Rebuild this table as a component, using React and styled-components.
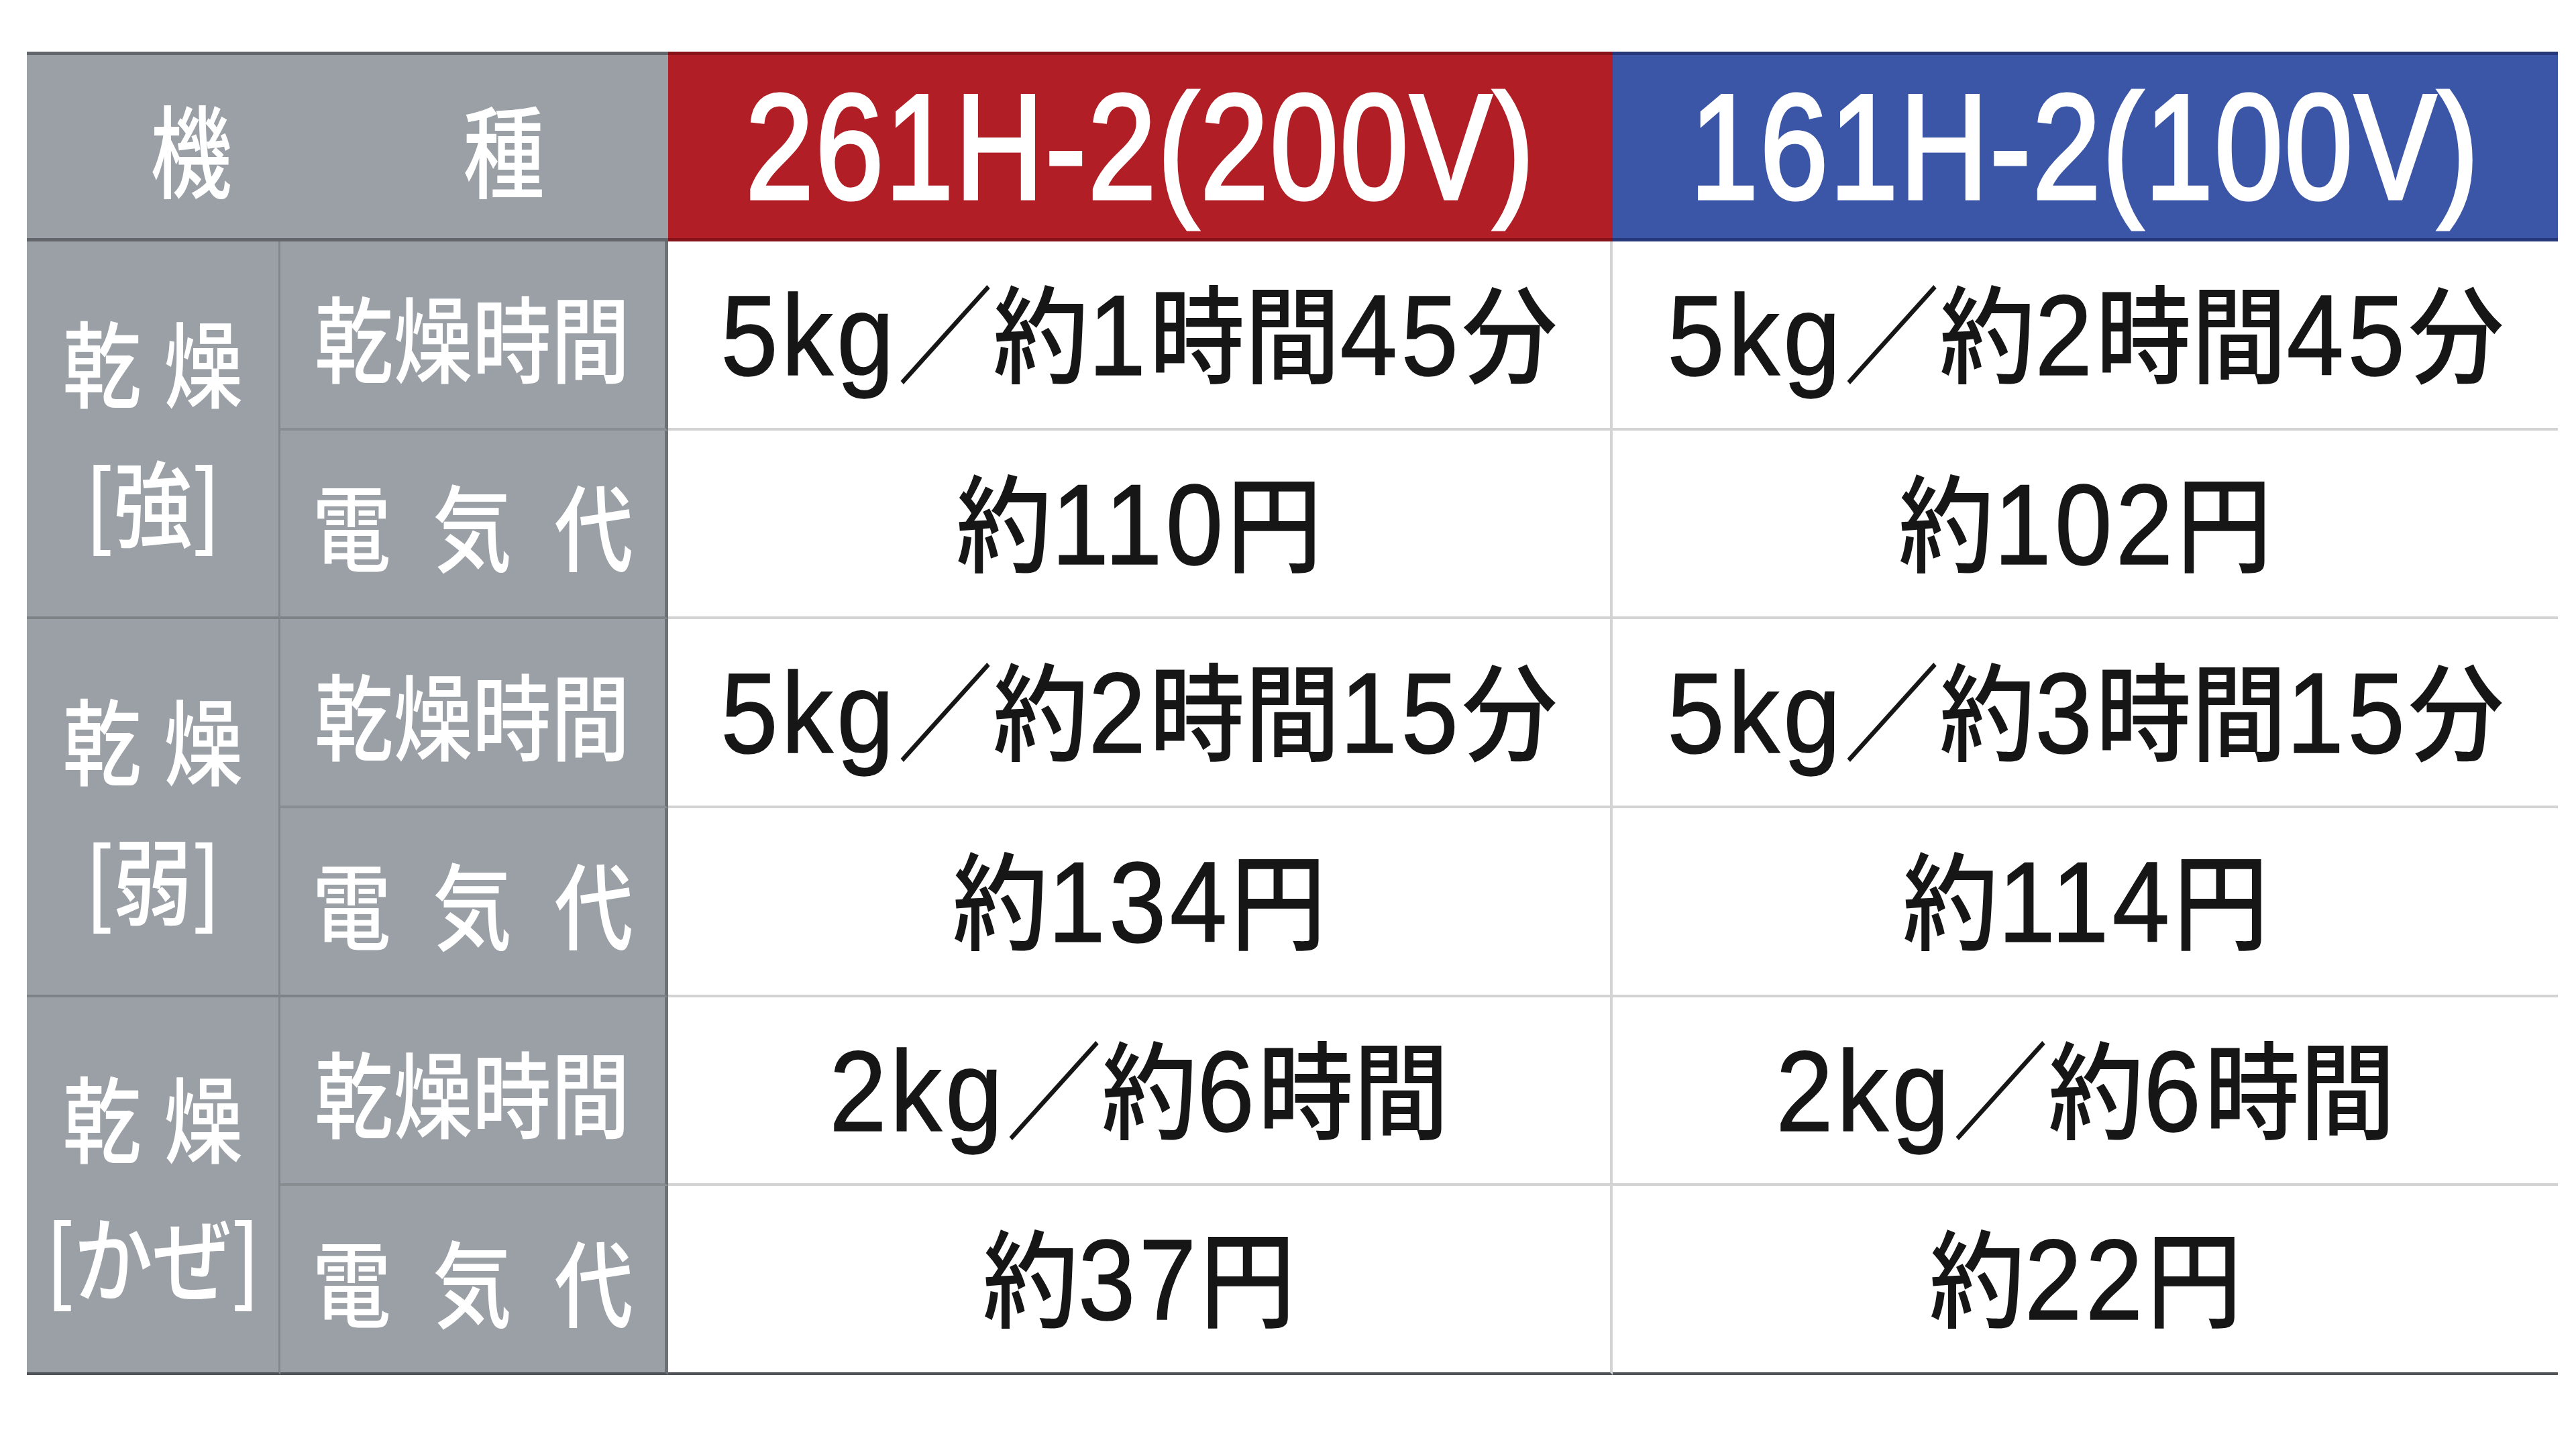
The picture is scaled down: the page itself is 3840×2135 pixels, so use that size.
import React from 'react';
import styled, { createGlobalStyle } from 'styled-components';

const Global = createGlobalStyle`
  html, body { margin: 0; padding: 0; background: #ffffff; }
  body { font-family: "Noto Sans CJK JP", sans-serif; }
  * { box-sizing: border-box; }
`;

const GRAY = '#9aa0a5';
const LATIN = '"Liberation Sans", Arial, sans-serif';
const CJK = '"Noto Sans CJK JP", "Noto Sans CJK SC", sans-serif';

const Page = styled.div`
  padding: 77px 0 0 40px;
  width: 3840px;
  height: 2135px;
  background: #fff;
`;

const Table = styled.div`
  display: grid;
  grid-template-columns: 378px 578px 1408px 1409px;
  grid-template-rows: 283px repeat(6, 281.67px);
  width: 3773px;
`;

const Cell = styled.div`
  display: flex;
  align-items: center;
  justify-content: center;
  overflow: visible;
`;

const HeadCell = styled(Cell)`
  grid-column: ${p => p.$span || 'auto'};
  background: ${p => p.$bg};
  border-top: 5px solid ${p => p.$edge};
  border-bottom: 5px solid ${p => p.$edge};
  color: #ffffff;
`;

const ModelName = styled.span`
  display: inline-block;
  font-family: ${LATIN};
  font-weight: 400;
  font-size: 223px;
  line-height: 1;
  letter-spacing: 3px;
  color: #ffffff;
  -webkit-text-stroke: 5px #ffffff;
  white-space: nowrap;
  transform: scaleX(0.82);
  transform-origin: center;
`;

const Condensed = styled.span`
  display: inline-block;
  font-family: ${CJK};
  font-size: ${p => p.$size || 140}px;
  font-weight: 500;
  line-height: 1;
  color: #ffffff;
  white-space: nowrap;
  transform: scaleX(${p => p.$sx || 0.84});
  transform-origin: center;
`;

const Pair = styled.div`
  display: flex;
  align-items: center;
  gap: ${p => p.$gap}px;
`;

const GroupCell = styled(Cell)`
  grid-row: span 2;
  background: ${GRAY};
  border-right: 3px solid #82878c;
  border-bottom: ${p => (p.$last ? '4px solid #505458' : '4px solid #7d8287')};
`;

const GroupStack = styled.div`
  display: flex;
  flex-direction: column;
  align-items: center;
`;

const GroupLine = styled.div`
  height: 208px;
  display: flex;
  align-items: center;
  justify-content: center;
`;

const LabelCell = styled(Cell)`
  background: ${GRAY};
  border-right: 5px solid #6c7176;
  border-bottom: ${p => (p.$last ? '4px solid #505458' : p.$groupEnd ? '4px solid #7d8287' : '4px solid #888d92')};
`;

const Spread = styled.div`
  width: ${p => p.$width}px;
  display: flex;
  justify-content: space-between;
  align-items: center;
`;

const ValueCell = styled(Cell)`
  background: #ffffff;
  border-right: ${p => (p.$divider ? '4px solid #d4d4d4' : 'none')};
  border-bottom: ${p => (p.$last ? '4px solid #505458' : '4px solid #d3d3d3')};
`;

const ValueText = styled.span`
  display: inline-block;
  font-family: ${CJK};
  font-size: 158px;
  font-weight: 500;
  line-height: 1;
  color: #161616;
  white-space: nowrap;
  transform: scaleX(0.9);
  transform-origin: center;
`;

const Latin = styled.span`
  font-family: ${LATIN};
  font-size: 1.08em;
  font-weight: 400;
  letter-spacing: 0.035em;
  -webkit-text-stroke: 1.5px #161616;
`;

const splitRuns = s => s.match(/[\x00-\x7F]+|[^\x00-\x7F]+/g) || [];

const Value = ({ text }) => (
  <ValueText>
    {splitRuns(text).map((run, i) =>
      /^[\x00-\x7F]+$/.test(run) ? <Latin key={i}>{run}</Latin> : <React.Fragment key={i}>{run}</React.Fragment>
    )}
  </ValueText>
);

const groups = [
  {
    mode: '[強]',
    rows: [
      { label: '乾燥時間', a: '5kg／約1時間45分', b: '5kg／約2時間45分' },
      { label: '電気代', a: '約110円', b: '約102円' },
    ],
  },
  {
    mode: '[弱]',
    rows: [
      { label: '乾燥時間', a: '5kg／約2時間15分', b: '5kg／約3時間15分' },
      { label: '電気代', a: '約134円', b: '約114円' },
    ],
  },
  {
    mode: '[かぜ]',
    rows: [
      { label: '乾燥時間', a: '2kg／約6時間', b: '2kg／約6時間' },
      { label: '電気代', a: '約37円', b: '約22円' },
    ],
  },
];

const Label = ({ text }) =>
  text.length === 3 ? (
    <Spread $width={501}>
      {text.split('').map((c, i) => (
        <Condensed key={i}>{c}</Condensed>
      ))}
    </Spread>
  ) : (
    <Condensed>{text}</Condensed>
  );

export default function App() {
  return (
    <>
      <Global />
      <Page>
        <Table>
          <HeadCell $span="1 / 3" $bg={GRAY} $edge="#62666b">
            <Pair $gap={316}>
              <Condensed $size={150} $sx={0.81}>機</Condensed>
              <Condensed $size={150} $sx={0.81}>種</Condensed>
            </Pair>
          </HeadCell>
          <HeadCell $bg="#b21e25" $edge="#86121a">
            <ModelName>261H-2(200V)</ModelName>
          </HeadCell>
          <HeadCell $bg="#3c56a7" $edge="#26387a">
            <ModelName>161H-2(100V)</ModelName>
          </HeadCell>

          {groups.map((g, gi) => {
            const lastGroup = gi === groups.length - 1;
            return (
              <React.Fragment key={gi}>
                <GroupCell $last={lastGroup}>
                  <GroupStack>
                    <GroupLine>
                      <Pair $gap={10}>
                        <Condensed>乾</Condensed>
                        <Condensed>燥</Condensed>
                      </Pair>
                    </GroupLine>
                    <GroupLine>
                      <Condensed>{g.mode}</Condensed>
                    </GroupLine>
                  </GroupStack>
                </GroupCell>
                {g.rows.map((r, ri) => {
                  const last = lastGroup && ri === g.rows.length - 1;
                  const groupEnd = ri === g.rows.length - 1;
                  return (
                    <React.Fragment key={ri}>
                      <LabelCell $last={last} $groupEnd={groupEnd}>
                        <Label text={r.label} />
                      </LabelCell>
                      <ValueCell $divider $last={last}>
                        <Value text={r.a} />
                      </ValueCell>
                      <ValueCell $last={last}>
                        <Value text={r.b} />
                      </ValueCell>
                    </React.Fragment>
                  );
                })}
              </React.Fragment>
            );
          })}
        </Table>
      </Page>
    </>
  );
}
